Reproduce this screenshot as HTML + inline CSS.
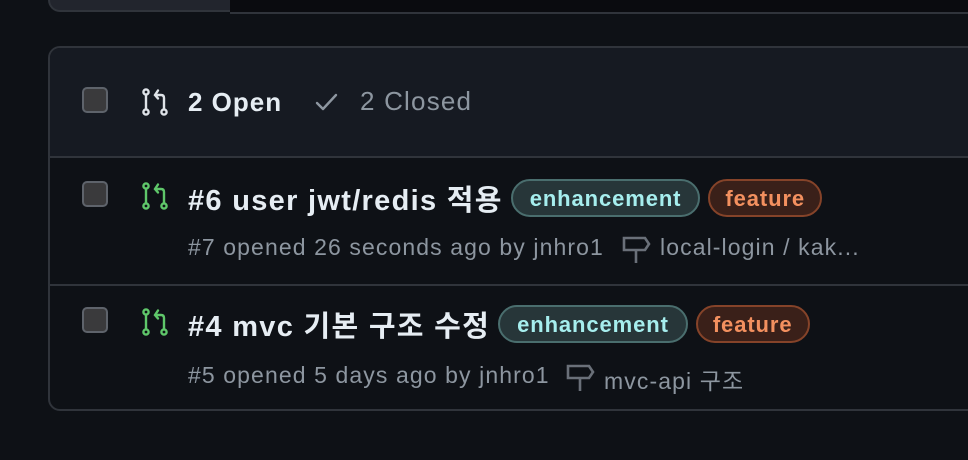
<!DOCTYPE html>
<html><head><meta charset="utf-8"><style>
body{margin:0;width:968px;height:460px;background:#0e1116;overflow:hidden;font-family:"Liberation Sans","Noto Sans CJK KR",sans-serif;position:relative}
.a{position:absolute}
.cb{position:absolute;width:26px;height:26px;border:2px solid #5e636b;border-radius:5px;background:#3a3a3c;box-sizing:border-box}
.row{position:absolute;display:flex;align-items:center;white-space:nowrap}
.t{color:#e6edf3;font-weight:bold;font-size:29px;letter-spacing:1.3px}
.m{position:absolute;color:#8d96a0;font-size:23px;letter-spacing:1.1px;white-space:nowrap}
.lb{height:38px;border-radius:20px;box-sizing:border-box;font-size:22px;font-weight:bold;line-height:35px;padding:0 17px;letter-spacing:0.9px;margin-left:8px}
.en{background:#273639;border:2px solid #4a6e6e;color:#a6eeee}
.fe{background:#3a2019;border:2px solid #854329;color:#f3905f;padding:0 15px}
</style></head><body>
<div class="a" style="left:48px;top:-20px;width:182px;height:32px;background:#22252d;border:2px solid #30343b;border-top:none;border-right:none;border-radius:0 0 0 12px;box-sizing:border-box"></div>
<div class="a" style="left:230px;top:0;width:738px;height:12px;background:#0a0b0f;border-bottom:2px solid #30343b"></div>
<div class="a" style="left:48px;top:46px;width:940px;height:365px;border:2px solid #30343b;border-radius:12px;box-sizing:border-box;overflow:hidden">
 <div class="a" style="left:0;top:0;width:100%;height:108px;background:#161a22;border-bottom:2px solid #30343b"></div>
 <div class="a" style="left:0;top:236px;width:100%;height:2px;background:#30343b"></div>
</div>
<div class="cb" style="left:82px;top:87px"></div>
<svg class="a" style="left:142px;top:88px" width="28" height="28" viewBox="0 0 28 28" fill="none" stroke="#dfe3e8" stroke-width="2.4" stroke-linecap="round"><circle cx="4" cy="4" r="2.6"/><circle cx="4" cy="24" r="2.6"/><circle cx="22" cy="24" r="2.6"/><path d="M4 7v14M22 21V10c0-2-1-3-3-3h-5M16 2.5L13 7l3 3.5"/></svg>
<div class="row" style="left:188px;top:84px;height:36px"><span class="t" style="font-size:26px;letter-spacing:1px">2 Open</span></div>
<svg class="a" style="left:314px;top:91px" width="26" height="22" viewBox="0 0 26 22" fill="none" stroke="#8d96a0" stroke-width="2.4" stroke-linecap="round" stroke-linejoin="round"><path d="M3 12l6 6L22 4"/></svg>
<div class="m" style="left:360px;top:86px;font-size:26px;letter-spacing:1.2px">2 Closed</div>

<div class="cb" style="left:82px;top:181px"></div>
<svg class="a" style="left:142px;top:182px" width="28" height="28" viewBox="0 0 28 28" fill="none" stroke="#5fc76a" stroke-width="2.4" stroke-linecap="round"><circle cx="4" cy="4" r="2.6"/><circle cx="4" cy="24" r="2.6"/><circle cx="22" cy="24" r="2.6"/><path d="M4 7v14M22 21V10c0-2-1-3-3-3h-5M16 2.5L13 7l3 3.5"/></svg>
<div class="row" style="left:188px;top:179px;height:38px"><span class="t">#6 user jwt/redis 적용</span><span class="lb en">enhancement</span><span class="lb fe">feature</span></div>
<div class="m" style="left:188px;top:234px">#7 opened 26 seconds ago by jnhro1</div>
<svg class="a" style="left:621px;top:232px" width="32" height="34" viewBox="0 0 32 34" fill="none" stroke="#6a7079" stroke-width="2.6"><path d="M3 6h21l4 6-4 6H3zM15 18v13"/></svg>
<div class="m" style="left:660px;top:234px">local-login / kak...</div>

<div class="cb" style="left:82px;top:307px"></div>
<svg class="a" style="left:142px;top:308px" width="28" height="28" viewBox="0 0 28 28" fill="none" stroke="#5fc76a" stroke-width="2.4" stroke-linecap="round"><circle cx="4" cy="4" r="2.6"/><circle cx="4" cy="24" r="2.6"/><circle cx="22" cy="24" r="2.6"/><path d="M4 7v14M22 21V10c0-2-1-3-3-3h-5M16 2.5L13 7l3 3.5"/></svg>
<div class="row" style="left:188px;top:305px;height:38px"><span class="t">#4 mvc 기본 구조 수정</span><span class="lb en">enhancement</span><span class="lb fe">feature</span></div>
<div class="m" style="left:188px;top:362px">#5 opened 5 days ago by jnhro1</div>
<svg class="a" style="left:565px;top:360px" width="32" height="34" viewBox="0 0 32 34" fill="none" stroke="#6a7079" stroke-width="2.6"><path d="M3 6h21l4 6-4 6H3zM15 18v13"/></svg>
<div class="m" style="left:604px;top:362px">mvc-api 구조</div>
</body></html>
